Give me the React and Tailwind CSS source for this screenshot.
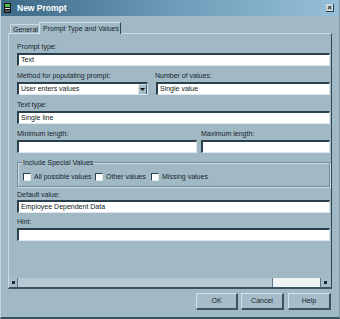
import React from 'react';

const Label = ({ children, className = '' }) => (
  <div className={`h-[9px] leading-[9px] whitespace-nowrap ${className}`}>{children}</div>
);

const Field = ({ value = '', className = '' }) => (
  <div
    className={`h-[13px] bg-white border-t-2 border-l-2 border-b border-r border-t-[#2b404d] border-l-[#2b404d] border-b-[#dde7ec] border-r-[#dde7ec] pl-[2px] leading-[10px] text-[#0e1a20] overflow-hidden whitespace-nowrap ${className}`}
  >
    {value}
  </div>
);

const Check = ({ label, className = '' }) => (
  <div className={`flex items-center ${className}`}>
    <div className="w-[8px] h-[8px] shrink-0 bg-white border-t border-l border-b border-r border-t-[#2b404d] border-l-[#2b404d] border-b-[#dde7ec] border-r-[#dde7ec]" />
    <span className="ml-[3px] leading-[9px] whitespace-nowrap">{label}</span>
  </div>
);

const Button = ({ children, className = '' }) => (
  <div
    className={`h-[17px] flex items-center justify-center bg-[#a6bdc9] border-t border-l border-b-2 border-r-2 border-t-[#d6e3ea] border-l-[#d6e3ea] border-b-[#3b5463] border-r-[#3b5463] ${className}`}
  >
    {children}
  </div>
);

export default function App() {
  return (
    <div className="w-[340px] h-[319px] flex flex-col overflow-hidden bg-[#a1b9c5] border-l border-r border-b-2 border-l-[#c6d6df] border-r-[#7d97a5] border-b-[#34505e] font-['Liberation_Sans',Arial,sans-serif] text-[7px] text-[#17252d]">
      {/* title bar */}
      <div className="h-[16px] shrink-0 flex items-center bg-linear-to-r from-[#3b6986] via-[#6f9bb8] to-[#95bfd8]">
        <svg width="7" height="10" viewBox="0 0 7 10" className="ml-[3px]">
          <rect x="0" y="0" width="7" height="10" fill="#111" />
          <rect x="1" y="1" width="5" height="3" fill="#49c24a" />
          <rect x="1" y="5" width="5" height="1" fill="#e8e8e8" />
          <rect x="1" y="7" width="5" height="2" fill="#555" />
        </svg>
        <span className="ml-[6px] text-white font-bold text-[8.5px] leading-none">New Prompt</span>
        <div className="ml-auto mr-[5px] w-[8px] h-[8px] flex items-center justify-center bg-[#cfdbe2] border-b border-r border-b-[#2a3b45] border-r-[#2a3b45] text-[#0d1418] text-[8px] font-bold leading-none">
          ×
        </div>
      </div>

      <div className="flex-1 flex flex-col pl-[7px] pr-[7px]">
        {/* tabs */}
        <div className="mt-[4px] h-[14px] mb-[-1px] flex items-end pl-[2px] relative z-10">
          <div className="h-[9px] mb-[1px] w-[29px] pl-[2px] leading-[9px] border-t border-l border-t-[#cbd9e1] border-l-[#cbd9e1] bg-[#a1b9c5] whitespace-nowrap">
            General
          </div>
          <div className="h-[12px] w-[82px] pl-[3px] pt-[1px] leading-[9px] border-t border-l border-r border-t-[#d2e0e7] border-l-[#d2e0e7] border-r-[#2e4654] bg-[#a1b9c5] whitespace-nowrap">
            Prompt Type and Values
          </div>
        </div>

        {/* panel */}
        <div className="h-[256px] shrink-0 flex flex-col border-t border-l border-r border-b-2 border-t-[#ccdae2] border-l-[#ccdae2] border-r-[#2e4654] border-b-[#3b5564]">
          <div className="flex-1 pl-[8px] pr-[1px] pt-[8px] flex flex-col">
            <Label>Prompt type:</Label>
            <Field value="Text" className="mt-[2px]" />

            <div className="mt-[5px] flex">
              <div className="w-[131px]">
                <Label>Method for populating prompt:</Label>
                <div className="mt-[2px] h-[13px] flex bg-white border-t-2 border-l-2 border-b border-r border-t-[#2b404d] border-l-[#2b404d] border-b-[#dde7ec] border-r-[#dde7ec]">
                  <div className="flex-1 pl-[2px] leading-[10px] whitespace-nowrap overflow-hidden text-[#0e1a20]">User enters values</div>
                  <div className="w-[9px] h-full flex items-center justify-center bg-[#a6bdc9] border-l border-t border-l-[#d6e3ea] border-t-[#d6e3ea] border-r border-r-[#3b5463]">
                    <svg width="5" height="3" viewBox="0 0 5 3">
                      <path d="M0 0H5L2.5 3Z" fill="#111" />
                    </svg>
                  </div>
                </div>
              </div>
              <div className="flex-1 ml-[7px]">
                <Label>Number of values:</Label>
                <Field value="Single value" className="mt-[2px] ml-[1px]" />
              </div>
            </div>

            <Label className="mt-[5px]">Text type:</Label>
            <Field value="Single line" className="mt-[2px]" />

            <div className="mt-[5px] flex">
              <div className="w-[180px]">
                <Label>Minimum length:</Label>
                <Field className="mt-[2px]" />
              </div>
              <div className="flex-1 ml-[4px]">
                <Label>Maximum length:</Label>
                <Field className="mt-[2px]" />
              </div>
            </div>

            {/* group box */}
            <div className="relative mt-[9px] h-[25px] border border-[#6f8997] shadow-[inset_1px_1px_0_#d0dde5,1px_1px_0_#d0dde5] flex items-center pl-[5px] pt-[4px]">
              <div className="absolute left-[4px] top-[-5px] px-[1px] bg-[#a1b9c5] leading-[9px] whitespace-nowrap">
                Include Special Values
              </div>
              <Check label="All possible values" className="w-[72px]" />
              <Check label="Other values" className="w-[56px]" />
              <Check label="Missing values" />
            </div>

            <Label className="mt-[3px]">Default value:</Label>
            <Field value="Employee Dependent Data" className="mt-[1px]" />

            <Label className="mt-[4px]">Hint:</Label>
            <Field className="mt-[2px]" />
          </div>

          {/* horizontal scrollbar */}
          <div className="h-[9px] flex bg-[#b6c9d3] mr-[2px]">
            <div className="w-[9px] h-full flex items-center justify-center bg-[#a6bdc9] border-r border-r-[#5c7684]">
              <div className="w-[3px] h-[3px] bg-[#1c2a33]" />
            </div>
            <div className="flex-1" />
            <div className="w-[48px] h-full bg-[#eef3f6] border-l border-l-[#5c7684]" />
            <div className="w-[9px] h-full flex items-center justify-center bg-[#a6bdc9] border-l border-l-[#5c7684]">
              <div className="w-[3px] h-[3px] bg-[#1c2a33]" />
            </div>
          </div>
        </div>

        {/* buttons */}
        <div className="mt-[4px] flex justify-end pr-[1px]">
          <Button className="w-[42px]">OK</Button>
          <Button className="w-[43px] ml-[3px]">Cancel</Button>
          <Button className="w-[43px] ml-[4px]">Help</Button>
        </div>
      </div>
    </div>
  );
}
